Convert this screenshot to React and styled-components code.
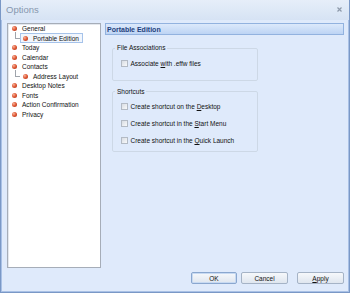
import React from 'react';
import styled, { createGlobalStyle } from 'styled-components';

const GlobalStyle = createGlobalStyle`
  html, body {
    margin: 0;
    padding: 0;
  }
  body {
    width: 350px;
    height: 293px;
    overflow: hidden;
    font-family: "Liberation Sans", Arial, sans-serif;
    background: #dfeafb;
  }
`;

const Window = styled.div`
  box-sizing: border-box;
  width: 350px;
  height: 293px;
  display: flex;
  flex-direction: column;
  background: #dfeafb;
  border: 1px solid #7a98c6;
  border-top: none;
  box-shadow: inset 1px 0 0 #a9c1e6, inset -1px 0 0 #a9c1e6, inset 0 -1px 0 #a9c1e6;
`;

const TitleBar = styled.div`
  box-sizing: border-box;
  height: 20px;
  flex: none;
  display: flex;
  align-items: center;
  justify-content: space-between;
  padding: 0 6px 2px 5px;
  background: linear-gradient(#e6eef9, #d6e3f4);
  color: #8797ae;
  font-size: 9.5px;
`;

const Close = styled.svg`
  width: 5px;
  height: 5px;
  margin-right: 1px;
`;

const Body = styled.div`
  flex: none;
  display: flex;
  gap: 4px;
  padding: 3px 5px 0 6px;
  height: 245px;
`;

const Tree = styled.ul`
  box-sizing: border-box;
  width: 94px;
  height: 245px;
  margin: 0;
  padding: 0;
  list-style: none;
  background: #fff;
  border: 1px solid #a6adb8;
  box-shadow: inset 1px 1px 0 #e4e8ee;
`;

const Row = styled.li`
  position: relative;
  height: 9.5px;
  display: flex;
  align-items: center;
  padding-left: ${p => (p.$level ? 12 : 3.5)}px;

  ${p =>
    p.$level
      ? `&::before {
    content: '';
    position: absolute;
    left: 7px;
    top: -2px;
    width: 4px;
    height: 6.5px;
    border-left: 1px solid #9fa4ab;
    border-bottom: 1px solid #9fa4ab;
  }`
      : ''}
`;

const Node = styled.span`
  box-sizing: border-box;
  display: flex;
  align-items: center;
  gap: 5.5px;
  height: 10px;
  padding: 0 3px 0 ${p => (p.$level ? 1.5 : 0)}px;
  border: 1px solid ${p => (p.$selected ? '#a6c3ea' : 'transparent')};
  background: ${p => (p.$selected ? '#f1f6fd' : 'transparent')};
  margin-left: ${p => (p.$level ? 0 : -1)}px;
  font-size: 6.5px;
  color: #111;
  white-space: nowrap;
`;

const Bullet = styled.span`
  flex: none;
  width: 5px;
  height: 5px;
  border-radius: 50%;
  background: radial-gradient(circle at 35% 35%, #f9b39a 0%, #dd5430 50%, #a3301a 100%);
`;

const Panel = styled.div`
  flex: 1;
  display: flex;
  flex-direction: column;
`;

const Header = styled.div`
  box-sizing: border-box;
  height: 12px;
  display: flex;
  align-items: center;
  padding-left: 1px;
  border: 1px solid #92b2df;
  background: linear-gradient(#dce9fb, #bdd4f4);
  color: #1f3f7c;
  font-weight: bold;
  font-size: 7px;
`;

const Group = styled.fieldset`
  box-sizing: border-box;
  width: 146px;
  margin: ${p => p.$top}px 0 0 7px;
  padding: 0;
  border: 1px solid #cdd8e6;
  border-radius: 2px;
  min-inline-size: 0;
`;

const Legend = styled.legend`
  margin-left: 2px;
  padding: 0 2px;
  font-size: 6.5px;
  line-height: 8px;
  color: #111;
`;

const Options = styled.div`
  display: flex;
  flex-direction: column;
  padding: 2.5px 0 ${p => p.$bottom}px 8px;
`;

const Check = styled.label`
  height: 17px;
  display: flex;
  align-items: center;
  gap: 2.5px;
  font-size: 6.5px;
  color: #111;
`;

const Box = styled.span`
  box-sizing: border-box;
  width: 7px;
  height: 7px;
  border: 1px solid #b3bac4;
  background: linear-gradient(135deg, #d9dde3, #f8f9fa);
`;

const Footer = styled.div`
  flex: none;
  display: flex;
  justify-content: flex-end;
  gap: 4px;
  padding: 4px 5px 0 0;
`;

const Button = styled.button`
  box-sizing: border-box;
  width: ${p => p.$w}px;
  height: 12px;
  margin: 0 0 0 ${p => p.$gap || 0}px;
  padding: 0;
  border: 1px solid ${p => (p.$default ? '#8aa7cf' : '#a5b3c6')};
  border-radius: 2px;
  background: linear-gradient(#f6f8fb, #dfe6ef);
  box-shadow: ${p => (p.$default ? 'inset 0 0 0 1px #c8daf2' : 'none')};
  font-family: "Liberation Sans", Arial, sans-serif;
  font-size: 6.5px;
  color: #111;
`;

const tree = [
  { label: 'General' },
  { label: 'Portable Edition', level: 1, selected: true },
  { label: 'Today' },
  { label: 'Calendar' },
  { label: 'Contacts' },
  { label: 'Address Layout', level: 1 },
  { label: 'Desktop Notes' },
  { label: 'Fonts' },
  { label: 'Action Confirmation' },
  { label: 'Privacy' },
];

function Option({ children }) {
  return (
    <Check>
      <Box />
      <span>{children}</span>
    </Check>
  );
}

export default function App() {
  return (
    <>
      <GlobalStyle />
      <Window>
        <TitleBar>
          <span>Options</span>
          <Close viewBox="0 0 5 5">
            <path d="M0.5 0.5 L4.5 4.5 M4.5 0.5 L0.5 4.5" stroke="#8e9aab" strokeWidth="1.2" />
          </Close>
        </TitleBar>
        <Body>
          <Tree>
            {tree.map(item => (
              <Row key={item.label} $level={item.level}>
                <Node $level={item.level} $selected={item.selected}>
                  <Bullet />
                  {item.label}
                </Node>
              </Row>
            ))}
          </Tree>
          <Panel>
            <Header>Portable Edition</Header>
            <Group $top={9}>
              <Legend>File Associations</Legend>
              <Options $bottom={8}>
                <Option>Associate <u>w</u>ith .effw files</Option>
              </Options>
            </Group>
            <Group $top={7}>
              <Legend>Shortcuts</Legend>
              <Options $bottom={2}>
                <Option>Create shortcut on the <u>D</u>esktop</Option>
                <Option>Create shortcut in the <u>S</u>tart Menu</Option>
                <Option>Create shortcut in the <u>Q</u>uick Launch</Option>
              </Options>
            </Group>
          </Panel>
        </Body>
        <Footer>
          <Button $w={46} $default>OK</Button>
          <Button $w={47}>Cancel</Button>
          <Button $w={47} $gap={5}><u>A</u>pply</Button>
        </Footer>
      </Window>
    </>
  );
}
